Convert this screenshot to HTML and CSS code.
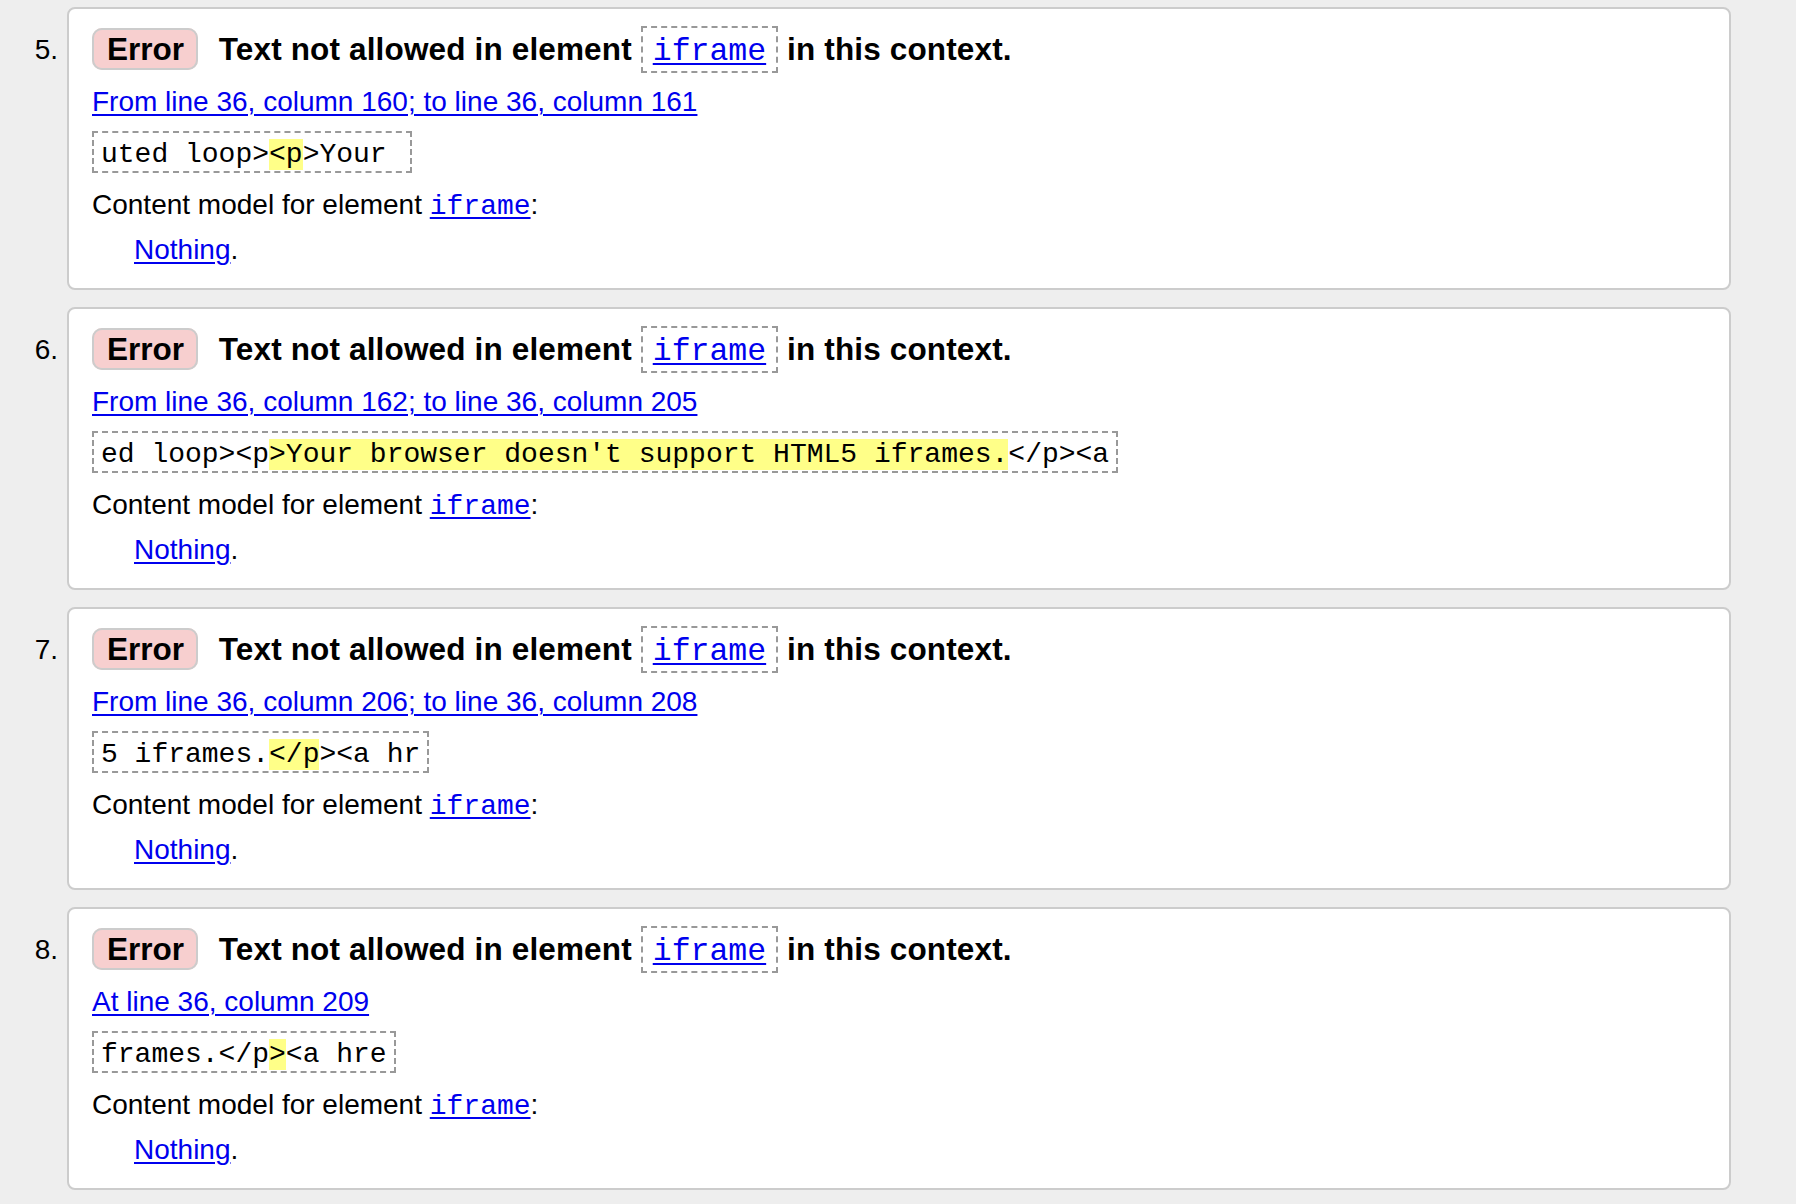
FILE: index.html
```html
<!DOCTYPE html>
<html lang="en">
<head>
<meta charset="utf-8">
<title>Validation messages</title>
<link rel="stylesheet" href="styles.css">
</head>
<body>
<ol class="messages">
  <li class="msg">
    <span class="num">5.</span>
    <div class="card">
      <p class="title"><strong class="badge">Error</strong> <span class="title-text">Text not allowed in element <code class="ref"><a href="#">iframe</a></code> in this context.</span></p>
      <p class="loc"><a href="#">From line 36, column 160; to line 36, column 161</a></p>
      <p class="extract"><code>uted loop&gt;<mark>&lt;p</mark>&gt;Your </code></p>
      <p class="model">Content model for element <code><a href="#">iframe</a></code>:</p>
      <p class="model-val"><a href="#">Nothing</a>.</p>
    </div>
  </li>
  <li class="msg">
    <span class="num">6.</span>
    <div class="card">
      <p class="title"><strong class="badge">Error</strong> <span class="title-text">Text not allowed in element <code class="ref"><a href="#">iframe</a></code> in this context.</span></p>
      <p class="loc"><a href="#">From line 36, column 162; to line 36, column 205</a></p>
      <p class="extract"><code>ed loop&gt;&lt;p<mark>&gt;Your browser doesn't support HTML5 iframes.</mark>&lt;/p&gt;&lt;a</code></p>
      <p class="model">Content model for element <code><a href="#">iframe</a></code>:</p>
      <p class="model-val"><a href="#">Nothing</a>.</p>
    </div>
  </li>
  <li class="msg">
    <span class="num">7.</span>
    <div class="card">
      <p class="title"><strong class="badge">Error</strong> <span class="title-text">Text not allowed in element <code class="ref"><a href="#">iframe</a></code> in this context.</span></p>
      <p class="loc"><a href="#">From line 36, column 206; to line 36, column 208</a></p>
      <p class="extract"><code>5 iframes.<mark>&lt;/p</mark>&gt;&lt;a hr</code></p>
      <p class="model">Content model for element <code><a href="#">iframe</a></code>:</p>
      <p class="model-val"><a href="#">Nothing</a>.</p>
    </div>
  </li>
  <li class="msg">
    <span class="num">8.</span>
    <div class="card">
      <p class="title"><strong class="badge">Error</strong> <span class="title-text">Text not allowed in element <code class="ref"><a href="#">iframe</a></code> in this context.</span></p>
      <p class="loc"><a href="#">At line 36, column 209</a></p>
      <p class="extract"><code>frames.&lt;/p<mark>&gt;</mark>&lt;a hre</code></p>
      <p class="model">Content model for element <code><a href="#">iframe</a></code>:</p>
      <p class="model-val"><a href="#">Nothing</a>.</p>
    </div>
  </li>
</ol>
</body>
</html>
```
FILE: styles.css
```css
html, body {
  margin: 0;
  padding: 0;
  background: #eeeeee;
}

body {
  font-family: "Liberation Sans", Arial, Helvetica, sans-serif;
  font-size: 28px;
  color: #000;
}

code {
  font-family: "Liberation Mono", "Courier New", monospace;
  font-size: 28px;
}

a {
  color: #0000ee;
  text-decoration: underline;
  text-decoration-thickness: 2px;
  text-underline-offset: 3px;
}

.messages {
  list-style: none;
  margin: 0;
  padding: 7px 65px 0 0;
}

.msg {
  display: flex;
  align-items: flex-start;
  margin-bottom: 17px;
}

.num {
  flex: 0 0 67px;
  box-sizing: border-box;
  text-align: right;
  padding-right: 9px;
  padding-top: 27px;
  line-height: 32px;
}

.card {
  flex: 1 1 auto;
  background: #ffffff;
  border: 2px solid #cccccc;
  border-radius: 8px;
  padding: 17px 23px 22px 23px;
}

.card p {
  margin: 0;
  line-height: 32px;
}

.card .title {
  font-size: 31.5px;
  font-weight: bold;
  line-height: 47px;
  height: 47px;
}

.badge {
  font-weight: bold;
  background: #f7cfcf;
  border: 2px solid #cccccc;
  border-radius: 10px;
  padding: 1px 12px 1px 13px;
  margin-right: 12px;
  line-height: 1;
}

.title-text {
  letter-spacing: 0.15px;
}

.ref {
  font-size: 31.5px;
  font-weight: normal;
  letter-spacing: 0;
  line-height: 1;
  border: 2px dashed #999999;
  padding: 6px 10px 2px 10px;
}

.card .loc {
  margin-top: 13px;
}

.card .extract {
  margin-top: 13px;
  height: 42px;
}

.extract code {
  display: inline-block;
  vertical-align: top;
  line-height: 32px;
  height: 32px;
  border: 2px dashed #999999;
  padding: 6px 7px 0 7px;
  white-space: pre;
}

mark {
  background: #ffff88;
  color: #000;
}

.card .model {
  margin-top: 16px;
}

.card .model-val {
  margin-top: 11px;
  margin-left: 42px;
}
```
